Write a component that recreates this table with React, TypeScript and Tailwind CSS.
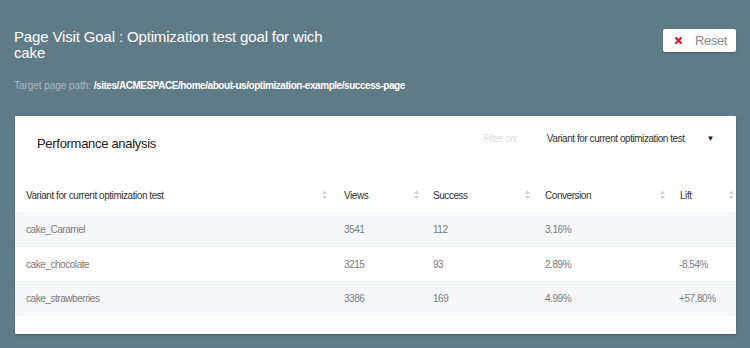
const rows = [
  { name: "cake_Caramel", views: "3541", success: "112", conversion: "3.16%", lift: "" },
  { name: "cake_chocolate", views: "3215", success: "93", conversion: "2.89%", lift: "-8.54%" },
  { name: "cake_strawberries", views: "3386", success: "169", conversion: "4.99%", lift: "+57.80%" },
];

const columns = [
  { label: "Variant for current optimization test", pr: "pr-[6px]" },
  { label: "Views", pr: "pr-[3px]" },
  { label: "Success", pr: "pr-[4px]" },
  { label: "Conversion", pr: "pr-[4px]" },
  { label: "Lift", pr: "pr-[2px]" },
];

const gridCols = "grid grid-cols-[318px_89px_112px_135px_67px]";

const SortIcon = () => (
  <svg width="5" height="10" viewBox="0 0 5 10" className="shrink-0">
    <path d="M2.5 0.5 L5 4 L0 4 Z" fill="#d2d2d2" />
    <path d="M2.5 9.5 L5 6 L0 6 Z" fill="#d2d2d2" />
  </svg>
);

const App = () => {
  return (
    <div
      className="w-[750px] h-[348px] bg-[#607b88] overflow-hidden"
      style={{ fontFamily: '"Liberation Sans", Arial, sans-serif' }}
    >
      {/* Header */}
      <div className="flex justify-between items-start pl-[14px] pr-[14px] pt-[29px]">
        <h1 className="w-[330px] text-[15px] leading-[16px] tracking-[-0.15px] text-white font-normal">
          Page Visit Goal : Optimization test goal for wich cake
        </h1>
        <button className="flex items-center h-[23px] w-[73px] bg-white rounded-[2px] shadow-[0_1px_2px_rgba(0,0,0,0.25)] pl-[12px]">
          <svg width="7" height="7" viewBox="0 0 7 7">
            <path d="M1 1 L6 6 M6 1 L1 6" stroke="#e8173c" strokeWidth="2.2" strokeLinecap="square" />
          </svg>
          <span className="ml-[13px] text-[13px] tracking-[-0.4px] text-[#8a8a8a]">Reset</span>
        </button>
      </div>

      <div className="pl-[14px] mt-[18px] text-[10px] leading-[14px]">
        <span className="text-[#a9b9c2] tracking-[-0.05px]">Target page path: </span>
        <span className="text-white font-bold tracking-[-0.45px]">/sites/ACMESPACE/home/about-us/optimization-example/success-page</span>
      </div>

      {/* Card */}
      <div className="ml-[15px] mt-[23px] w-[721px] h-[218px] bg-white rounded-[1px] shadow-[0_1px_2px_rgba(0,0,0,0.3)]">
        <div className="flex items-start h-[62px] pl-[22px] pr-[22px]">
          <h2 className="pt-[20px] text-[13px] leading-[16px] tracking-[-0.3px] text-[#222] font-normal">
            Performance analysis
          </h2>
          <div className="ml-auto flex items-center pt-[16px] text-[10px] leading-[14px] tracking-[-0.45px]">
            <span className="text-[#dcdcdc]">Filter on:</span>
            <span className="ml-[29px] text-[#333]">Variant for current optimization test</span>
            <span className="ml-[22px] text-[8px] text-[#222]">▼</span>
          </div>
        </div>

        <div className={`${gridCols} h-[34px] items-center text-[10px] tracking-[-0.45px] text-[#333]`}>
          {columns.map((c) => (
            <div key={c.label} className={`flex items-center justify-between pl-[11px] ${c.pr}`}>
              <span>{c.label}</span>
              <SortIcon />
            </div>
          ))}
        </div>

        {rows.map((r, idx) => (
          <div
            key={r.name}
            className={`${gridCols} h-[34.7px] items-center text-[10px] tracking-[-0.45px] text-[#7a7a7a] ${idx % 2 === 0 ? "bg-[#f6f7f9]" : "bg-white"}`}
          >
            <div className="pl-[11px]">{r.name}</div>
            <div className="pl-[11px]">{r.views}</div>
            <div className="pl-[11px]">{r.success}</div>
            <div className="pl-[11px]">{r.conversion}</div>
            <div className="pl-[10px]">{r.lift}</div>
          </div>
        ))}
      </div>
    </div>
  );
};

export default App;
